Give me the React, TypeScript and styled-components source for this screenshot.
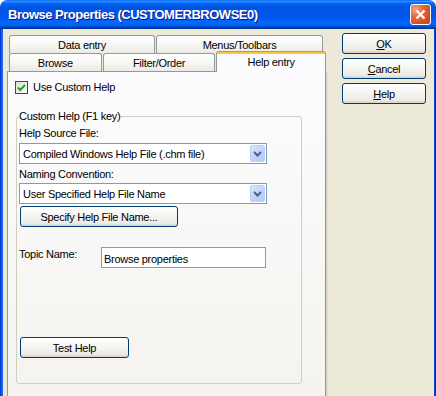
import React from "react";
import styled, { createGlobalStyle } from "styled-components";

const GlobalStyle = createGlobalStyle`
  html, body {
    margin: 0;
    padding: 0;
    background: #ffffff;
    overflow: hidden;
  }
  body {
    font-family: "Liberation Sans", Arial, sans-serif;
    font-size: 11px;
    letter-spacing: -0.28px;
    color: #000000;
  }
`;

const Window = styled.div`
  width: 436px;
  height: 396px;
  display: flex;
  flex-direction: column;
  overflow: hidden;
  border-radius: 7px 7px 0 0;
`;

const TitleBar = styled.div`
  height: 29px;
  flex-shrink: 0;
  display: flex;
  align-items: center;
  padding: 0 5px 0 8px;
  background: linear-gradient(
    to bottom,
    #0058ee 0%,
    #3593ff 4%,
    #288eff 6%,
    #127dff 8%,
    #036ffc 10%,
    #0262ee 14%,
    #0057e5 20%,
    #0054e3 24%,
    #0055eb 56%,
    #005bf5 66%,
    #026afe 76%,
    #0062ef 86%,
    #0052d6 92%,
    #0040ab 94%,
    #003092 100%
  );
`;

const TitleText = styled.span`
  flex: 1;
  color: #ffffff;
  font-weight: bold;
  font-size: 13px;
  letter-spacing: -0.5px;
  text-shadow: 1px 1px 0 #0a1883;
  padding-bottom: 1px;
`;

const CloseButton = styled.button`
  box-sizing: border-box;
  width: 21px;
  height: 21px;
  padding: 0;
  border: 1px solid #ffffff;
  border-radius: 3px;
  display: flex;
  align-items: center;
  justify-content: center;
  background: radial-gradient(
    circle at 25% 25%,
    #f4a98e 0%,
    #e56a43 35%,
    #d24e24 70%,
    #c0401c 100%
  );
`;

const Frame = styled.div`
  flex: 1;
  display: flex;
  padding: 0 3px;
  background: linear-gradient(
    to right,
    #0019cf 0,
    #0855dd 1px,
    #166aee 2px,
    #166aee calc(100% - 3px),
    #0855dd calc(100% - 2px),
    #001ea0 100%
  );
`;

const Body = styled.div`
  flex: 1;
  display: flex;
  align-items: flex-start;
  background: #ece9d8;
  padding: 4px 8px 0 4px;
`;

const TabArea = styled.div`
  width: 319px;
  display: flex;
  flex-direction: column;
  padding-top: 2px;
`;

const TabRow = styled.div`
  display: flex;
  align-items: flex-end;
  gap: 1px;
  height: 18px;
  padding-left: 2px;
`;

const Tab = styled.div<{ $width: number }>`
  box-sizing: border-box;
  width: ${({ $width }) => $width}px;
  height: 18px;
  border: 1px solid #919b9c;
  border-bottom: none;
  border-radius: 3px 3px 0 0;
  background: linear-gradient(to bottom, #ffffff 0%, #f7f7f4 50%, #eceae4 100%);
  text-align: center;
  line-height: 18px;
  white-space: nowrap;
`;

const ActiveTab = styled(Tab)`
  position: relative;
  z-index: 1;
  height: 21px;
  margin-bottom: -1px;
  border-top: none;
  padding-top: 3px;
  line-height: 16px;
  background: linear-gradient(
    to bottom,
    #e68b2c 0,
    #e68b2c 1px,
    #ffc73c 1px,
    #ffc73c 3px,
    #fcfcfe 3px
  );
`;

const Panel = styled.div`
  box-sizing: border-box;
  height: 340px;
  border: 1px solid #919b9c;
  background: linear-gradient(to bottom, #fcfcfe 0%, #f4f3ee 100%);
  box-shadow: 1px 1px 0 #d0cebf, 2px 2px 0 #e3e0d0;
  padding: 9px 7px 0;
`;

const CheckRow = styled.label`
  display: flex;
  align-items: center;
  gap: 5px;
  height: 13px;
  line-height: 13px;
`;

const CheckBox = styled.span`
  box-sizing: border-box;
  width: 13px;
  height: 13px;
  border: 1px solid #1c5180;
  background: linear-gradient(135deg, #dcdcd7 0%, #ffffff 100%);
  display: flex;
  align-items: center;
  justify-content: center;
`;

const Group = styled.fieldset`
  box-sizing: border-box;
  width: 286px;
  margin: 16px 0 0 1px;
  padding: 4px 2px 25px;
  border: 1px solid #d0d0bf;
  border-radius: 3px;
  display: flex;
  flex-direction: column;
  align-items: flex-start;
`;

const Legend = styled.legend`
  padding: 0;
  line-height: 13px;
`;

const FieldLabel = styled.div<{ $top?: number }>`
  line-height: 13px;
  margin-top: ${({ $top }) => $top ?? 0}px;
`;

const Combo = styled.div<{ $top: number }>`
  box-sizing: border-box;
  width: 248px;
  height: 21px;
  margin-top: ${({ $top }) => $top}px;
  padding: 1px;
  border: 1px solid #7f9db9;
  background: #ffffff;
  display: flex;
  align-items: center;
`;

const ComboText = styled.span`
  flex: 1;
  padding-left: 2px;
  white-space: nowrap;
`;

const DropButton = styled.span`
  box-sizing: border-box;
  width: 15px;
  align-self: stretch;
  border: 1px solid #bccff9;
  border-radius: 2px;
  background: linear-gradient(135deg, #dbe6fe 0%, #c3d5fc 45%, #b4c9f6 100%);
  display: flex;
  align-items: center;
  justify-content: center;
`;

const XPButton = styled.button<{ $width: number; $top?: number }>`
  box-sizing: border-box;
  width: ${({ $width }) => $width}px;
  height: 21px;
  margin: ${({ $top }) => $top ?? 0}px 0 0 1px;
  padding: 0;
  border: 1px solid #003c74;
  border-radius: 3px;
  background: linear-gradient(
    to bottom,
    #ffffff 0%,
    #f6f6f3 40%,
    #ecebe6 85%,
    #d6d0c5 100%
  );
  font: inherit;
  letter-spacing: inherit;
  color: #000000;
  text-align: center;
`;

const TopicRow = styled.div`
  display: flex;
  align-items: flex-start;
  margin-top: 20px;
`;

const TopicLabel = styled.span`
  width: 82px;
  padding-top: 1px;
  line-height: 13px;
`;

const TextField = styled.input`
  box-sizing: border-box;
  width: 165px;
  height: 21px;
  margin: 0;
  padding: 2px 0 0 2px;
  border: 1px solid #7f9db9;
  background: #ffffff;
  font: inherit;
  letter-spacing: inherit;
  color: #000000;
  outline: none;
`;

const ButtonColumn = styled.div`
  display: flex;
  flex-direction: column;
  gap: 4px;
  margin-left: 15px;
`;

const Chevron = () => (
  <svg width="9" height="6" viewBox="0 0 9 6">
    <path d="M1 1 L4.5 4.5 L8 1" fill="none" stroke="#4d6185" strokeWidth="2" />
  </svg>
);

const Check = () => (
  <svg width="9" height="8" viewBox="0 0 9 8">
    <path d="M1 3.5 L3.2 6 L8 1" fill="none" stroke="#21a121" strokeWidth="2" />
  </svg>
);

const CloseX = () => (
  <svg width="11" height="11" viewBox="0 0 11 11">
    <path d="M1.5 1.5 L9.5 9.5 M9.5 1.5 L1.5 9.5" stroke="#ffffff" strokeWidth="2.4" />
  </svg>
);

const App = () => (
  <>
    <GlobalStyle />
    <Window>
      <TitleBar>
        <TitleText>Browse Properties (CUSTOMERBROWSE0)</TitleText>
        <CloseButton aria-label="Close">
          <CloseX />
        </CloseButton>
      </TitleBar>
      <Frame>
        <Body>
          <TabArea>
            <TabRow>
              <Tab $width={146}>Data entry</Tab>
              <Tab $width={167}>Menus/Toolbars</Tab>
            </TabRow>
            <TabRow>
              <Tab $width={93}>Browse</Tab>
              <Tab $width={113}>Filter/Order</Tab>
              <ActiveTab $width={110}>Help entry</ActiveTab>
            </TabRow>
            <Panel>
              <CheckRow>
                <CheckBox>
                  <Check />
                </CheckBox>
                Use Custom Help
              </CheckRow>
              <Group>
                <Legend>Custom Help (F1 key)</Legend>
                <FieldLabel>Help Source File:</FieldLabel>
                <Combo $top={3}>
                  <ComboText>Compiled Windows Help File (.chm file)</ComboText>
                  <DropButton>
                    <Chevron />
                  </DropButton>
                </Combo>
                <FieldLabel $top={4}>Naming Convention:</FieldLabel>
                <Combo $top={2}>
                  <ComboText>User Specified Help File Name</ComboText>
                  <DropButton>
                    <Chevron />
                  </DropButton>
                </Combo>
                <XPButton $width={158} $top={2}>
                  Specify Help File Name...
                </XPButton>
                <TopicRow>
                  <TopicLabel>Topic Name:</TopicLabel>
                  <TextField defaultValue="Browse properties" readOnly />
                </TopicRow>
                <XPButton $width={109} $top={69}>
                  Test Help
                </XPButton>
              </Group>
            </Panel>
          </TabArea>
          <ButtonColumn>
            <XPButton $width={84}>
              <u>O</u>K
            </XPButton>
            <XPButton $width={84}>
              <u>C</u>ancel
            </XPButton>
            <XPButton $width={84}>
              <u>H</u>elp
            </XPButton>
          </ButtonColumn>
        </Body>
      </Frame>
    </Window>
  </>
);

export default App;
